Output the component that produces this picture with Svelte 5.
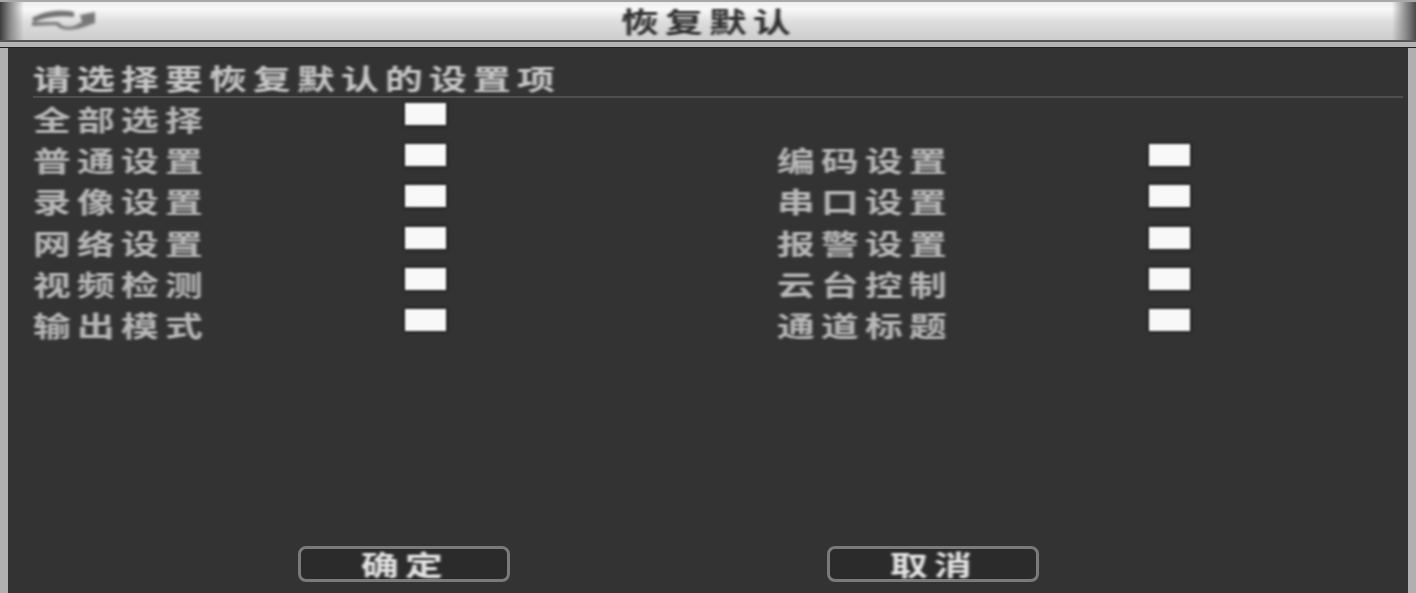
<script>
    const rows = [
        ["普通设置", "编码设置"],
        ["录像设置", "串口设置"],
        ["网络设置", "报警设置"],
        ["视频检测", "云台控制"],
        ["输出模式", "通道标题"]
    ]
</script>

<div class="dialog">
    <div class="titlebar">
        <svg class="logo" width="68" height="30" viewBox="0 0 68 30">
            <path d="M2 13 C14 6 30 4 44 7 L44 12 C30 10 16 12 4 17 Z" fill="#6f6f6f"/>
            <path d="M2 21 L26 20 C32 26 42 26 54 22 L65 18 L65 7 L50 10 L52 17 L44 21 C36 23 32 21 28 17 L2 17 Z" fill="#777777"/>
        </svg>
        <span class="title"><span class="wide">恢复默认</span></span>
    </div>
    <div class="rule"></div>
    <div class="panel">
        <div class="heading"><span class="wide">请选择要恢复默认的设置项</span></div>
        <div class="options">
            <div class="row">
                <div class="item"><span class="label"><span class="wide">全部选择</span></span><span class="box"></span></div>
            </div>
            {#each rows as row}
                <div class="row">
                    {#each row as name}
                        <div class="item"><span class="label"><span class="wide">{name}</span></span><span class="box"></span></div>
                    {/each}
                </div>
            {/each}
        </div>
        <div class="buttons">
            <button><span class="wide">确定</span></button>
            <button><span class="wide">取消</span></button>
        </div>
    </div>
</div>

<style>
    :global(body) {
        margin: 0;
        background: #333333;
    }

    .dialog {
        width: 1416px;
        height: 593px;
        display: flex;
        flex-direction: column;
        overflow: hidden;
        font-family: "Noto Sans CJK SC", "Liberation Sans", sans-serif;
    }

    /* the source capture is stretched sideways, so the glyphs are too */
    .wide {
        display: inline-block;
        font-size: 28px;
        line-height: 38px;
        font-weight: 700;
        letter-spacing: 4.6px;
        white-space: nowrap;
        transform: scaleX(1.35);
        transform-origin: left center;
        filter: blur(1.2px);
    }

    .titlebar {
        height: 38px;
        border-top: 2px solid #a8a8a8;
        border-bottom: 2px solid #555555;
        flex: none;
        display: flex;
        align-items: center;
        position: relative;
        background:
            linear-gradient(90deg, #3a3a3a 0, #8a8a8a 10px, rgba(255, 255, 255, 0) 24px, rgba(255, 255, 255, 0) 1392px, #8a8a8a 1406px, #4a4a4a 1416px),
            linear-gradient(180deg, #eeeeee 0, #f8f8f8 7px, #dddddd 20px, #cdcdcd 100%);
    }

    .logo {
        position: absolute;
        left: 30px;
        top: 3px;
        filter: blur(1.6px);
    }

    .title {
        margin-left: 621px;
        color: #2e2e2e;
    }

    .rule {
        height: 5px;
        flex: none;
        background: #b4b4b4;
        border-bottom: 1px solid #222222;
    }

    .panel {
        flex: 1;
        display: flex;
        flex-direction: column;
        min-height: 0;
        background: #333333;
        border-left: 8px solid #b0b0b0;
        border-right: 8px solid #b0b0b0;
        padding: 0 5px 0 25px;
    }

    .heading {
        height: 50px;
        flex: none;
        box-sizing: border-box;
        padding-top: 11px;
        line-height: 38px;
        color: #c8c8c8;
        border-bottom: 2px solid #4e4e4e;
    }

    .options {
        flex: 1;
        display: flex;
        flex-direction: column;
    }

    .row {
        height: 41.2px;
        display: grid;
        grid-template-columns: 744px 1fr;
        flex: none;
    }

    .item {
        display: flex;
    }

    .label {
        width: 371px;
        flex: none;
        height: 38px;
        margin-top: 2px;
        color: #b8b8b8;
    }

    .box {
        width: 41px;
        height: 22px;
        margin-top: 5px;
        margin-left: 1px;
        background: #f8f8f8;
        box-shadow: 0 0 3px 1px #1c1c1c;
        filter: blur(1px);
    }

    .buttons {
        height: 47px;
        flex: none;
        display: flex;
        padding-left: 265px;
        gap: 317px;
    }

    button {
        width: 212px;
        height: 36px;
        padding: 0 0 0 60px;
        box-sizing: border-box;
        display: flex;
        align-items: center;
        background: #2b2b2b;
        border: 3px solid #7a7a7a;
        border-radius: 8px;
        font-family: inherit;
        color: #e6e6e6;
        filter: blur(0.7px);
    }
</style>
